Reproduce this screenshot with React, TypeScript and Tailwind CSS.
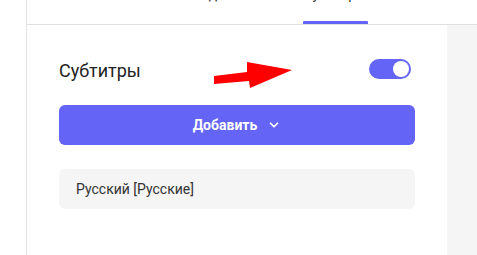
import { ChevronDown } from 'lucide-react';

const font = { fontFamily: 'Roboto, "Noto Sans", sans-serif' };

function Toggle({ on }: { on: boolean }) {
  return (
    <div
      className={`w-[42px] h-[20px] rounded-full p-[2px] flex items-center ${
        on ? 'bg-[#6464f6] justify-end' : 'bg-gray-300 justify-start'
      }`}
    >
      <div className="w-[16px] h-[16px] rounded-full bg-white" />
    </div>
  );
}

export default function App() {
  return (
    <div className="relative w-[477px] h-[255px] bg-white flex overflow-hidden" style={font}>
      {/* Left gutter */}
      <div className="w-[27px] shrink-0 bg-white border-r border-[#e3e3e3]" />

      <div className="flex-1 flex flex-col">
        {/* Tabs */}
        <div className="h-[25px] shrink-0 flex items-stretch border-b border-[#e0e0e0]">
          <div className="ml-[165px] flex flex-col">
            <span className="-mt-[15px] text-[14px] leading-[18px] text-[#333]">Видео</span>
          </div>
          <div className="ml-[70px] w-[65px] flex flex-col justify-between items-center">
            <span className="-mt-[15px] text-[14px] leading-[18px] text-[#333] whitespace-nowrap">
              Субтитры
            </span>
            <div className="w-full h-[3px] bg-[#6464f6] rounded-t-[1px]" />
          </div>
        </div>

        <div className="flex-1 flex">
          {/* Content */}
          <div className="w-[420px] shrink-0 px-[32px] pt-[34px] flex flex-col">
            <div className="h-[20px] flex items-start justify-between">
              <span className="text-[18px] leading-[24px] text-[#222]">Субтитры</span>
              <div className="mr-[4px]">
                <Toggle on />
              </div>
            </div>

            <button className="mt-[26px] h-[40px] w-full rounded-[6px] bg-[#6464f6] text-white text-[14px] font-bold flex items-center justify-center gap-[10px]">
              Добавить
              <ChevronDown className="w-[14px] h-[14px]" strokeWidth={3} />
            </button>

            <div className="mt-[24px] h-[40px] w-full rounded-[6px] bg-[#f5f5f5] pl-[17px] flex items-center text-[14px] text-[#333]">
              Русский [Русские]
            </div>
          </div>

          {/* Right side panel */}
          <div className="flex-1 bg-[#f5f5f5]" />
        </div>
      </div>

      {/* Annotation arrow */}
      <svg
        className="absolute left-[210px] top-[60px]"
        width="85"
        height="30"
        viewBox="0 0 85 30"
      >
        <polygon points="4,16 37,12 37,2 82,10 40,28 39,21 4,24" fill="#ff0000" />
      </svg>
    </div>
  );
}
